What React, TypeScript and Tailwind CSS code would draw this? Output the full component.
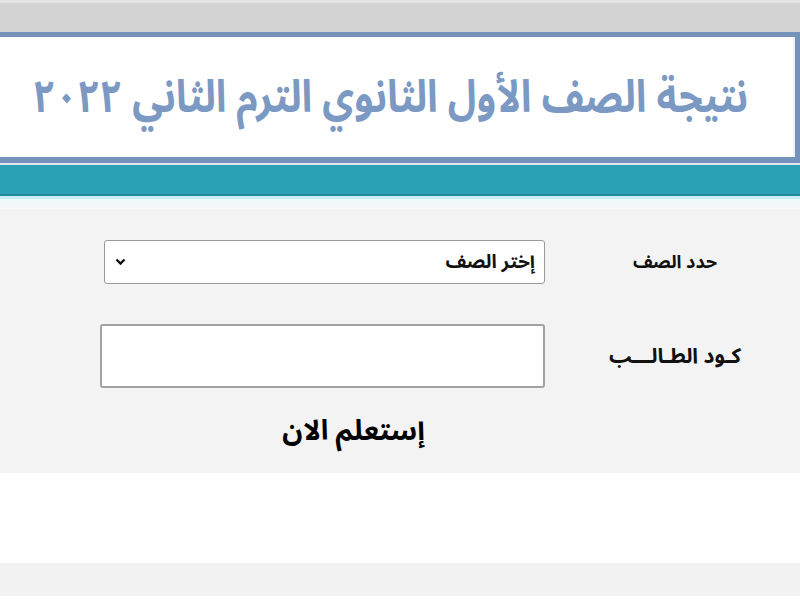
import React from 'react';

const arabic = { fontFamily: '"Noto Sans Arabic", "Noto Naskh Arabic", "DejaVu Sans", "Liberation Sans", sans-serif' };

const App = () => {
  return (
    <div className="w-[800px] h-[600px] overflow-hidden bg-white" style={arabic}>
      {/* top grey strip */}
      <div className="h-[3px] bg-[#e3e3e3]" />
      <div className="h-[29px] bg-[#d3d3d3]" />

      {/* title box */}
      <div className="h-[131px] border-t-[5px] border-b-[6px] border-r-[5px] border-[#7592ba] bg-white">
        <div className="flex h-full items-center justify-center border-r-2 border-[#eef2f7] pr-[12px]">
          <h1 dir="rtl" className="scale-y-[1.15] whitespace-nowrap text-[39px] font-bold leading-none text-[#7b99c2]">
            نتيجة الصف الأول الثانوي الترم الثاني ٢٠٢٢
          </h1>
        </div>
      </div>

      {/* teal bar */}
      <div className="h-[2px] bg-[#dfe8ef]" />
      <div className="h-[31px] border-b-2 border-[#23899c] bg-[#2aa1b5]" />
      <div className="h-[3px] bg-[#c9f0f5]" />
      <div className="h-[10px] bg-gradient-to-b from-[#eefbfc] to-[#f7f7f7]" />

      {/* form */}
      <div dir="rtl" className="h-[264px] bg-[#f3f3f3] pt-[31px]">
        <div className="flex items-center">
          <div className="w-[240px] pr-[10px] text-center text-[18px] font-bold text-[#111]">حدد الصف</div>
          <div className="relative mr-[15px] h-[44px] w-[441px] rounded-[3px] border border-[#9a9a9a] bg-white">
            <div className="pr-[9px] pt-[7px] text-[19px] font-bold text-[#111]">إختر الصف</div>
            <svg className="absolute left-[10px] top-[17px]" width="11" height="8" viewBox="0 0 11 8">
              <path d="M1.5 1.5 L5.5 5.5 L9.5 1.5" fill="none" stroke="#111" strokeWidth="2.4" />
            </svg>
          </div>
        </div>

        <div className="mt-[40px] flex items-center">
          <div className="w-[240px] pr-[10px] pt-[2px] text-center text-[21px] font-bold text-[#111]">كـود الطـالـــب</div>
          <input
            type="text"
            className="mr-[15px] h-[64px] w-[445px] rounded-[3px] border-2 border-[#a2a2a2] bg-white outline-none"
          />
        </div>

        <div className="flex">
          <div className="w-[255px]" />
          <div className="w-[445px] pl-[62px] pt-[30px] text-center text-[28px] font-bold leading-none text-black">
            إستعلم الان
          </div>
        </div>
      </div>

      {/* bottom */}
      <div className="h-[90px] bg-white" />
      <div className="h-[33px] bg-[#f2f2f2]" />
      <div className="h-[3px] bg-white" />
    </div>
  );
};

export default App;
